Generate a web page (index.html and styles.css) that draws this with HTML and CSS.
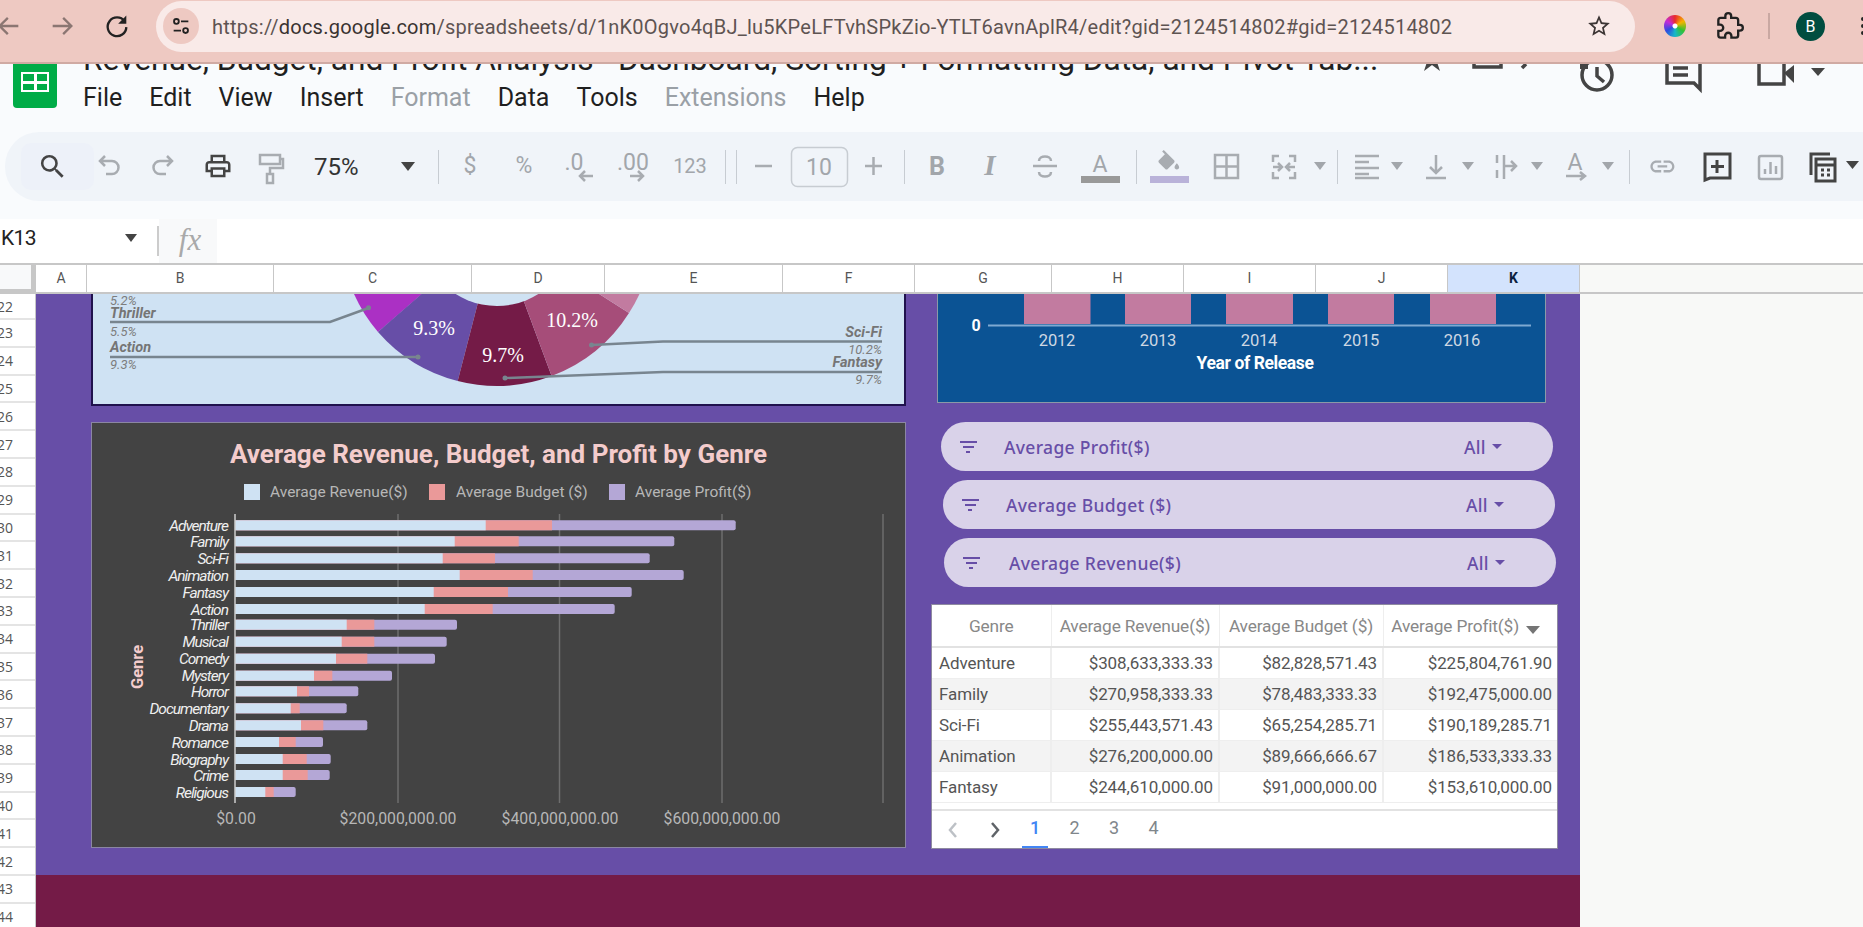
FILE: index.html
```html
<!DOCTYPE html>
<html lang="en">
<head>
    <meta charset="UTF-8">
    <title>Revenue, Budget, and Profit Analysis - Google Sheets</title>
    <link rel="stylesheet" href="styles.css">
</head>
<body>

    <!-- browser chrome -->
    <header class="browser">
        <svg class="nav-icon back" viewBox="0 0 24 24"><path d="M20 12H5M11 5l-7 7 7 7"/></svg>
        <svg class="nav-icon forward" viewBox="0 0 24 24"><path d="M4 12h15M13 5l7 7-7 7"/></svg>
        <svg class="nav-icon reload" viewBox="0 0 24 24"><path d="M18.5 8A8 8 0 1 0 20 13"/><path class="solid" d="M20 3v7h-7z"/></svg>
        <div class="url-pill">
            <span class="tune">
                <svg viewBox="0 0 24 24"><circle cx="7" cy="7" r="2.6"/><path d="M12 7h8M4 17h8"/><circle cx="17" cy="17" r="2.6"/></svg>
            </span>
            <span class="url">https://<b>docs.google.com</b>/spreadsheets/d/1nK0Ogvo4qBJ_lu5KPeLFTvhSPkZio-YTLT6avnAplR4/edit?gid=2124514802#gid=2124514802</span>
            <svg class="url-star" viewBox="0 0 24 24"><path d="M22 9.24l-7.19-.62L12 2 9.19 8.63 2 9.24l5.46 4.73L5.82 21 12 17.27 18.18 21l-1.63-7.03L22 9.24zM12 15.4l-3.76 2.27 1-4.28-3.32-2.88 4.38-.38L12 6.1l1.71 4.04 4.38.38-3.32 2.88 1 4.28L12 15.4z"/></svg>
        </div>
        <span class="color-wheel"></span>
        <svg class="puzzle" viewBox="0 0 24 24"><path d="M20.5 11H19V7c0-1.1-.9-2-2-2h-4V3.5C13 2.12 11.88 1 10.5 1S8 2.12 8 3.5V5H4c-1.1 0-1.99.9-1.99 2v3.8H3.5c1.49 0 2.7 1.21 2.7 2.7s-1.21 2.7-2.7 2.7H2V20c0 1.1.9 2 2 2h3.8v-1.5c0-1.49 1.21-2.7 2.7-2.7 1.49 0 2.7 1.21 2.7 2.7V22H17c1.1 0 2-.9 2-2v-4h1.5c1.38 0 2.5-1.12 2.5-2.5S21.88 11 20.5 11z"/></svg>
        <span class="chrome-sep"></span>
        <span class="avatar">B</span>
        <span class="kebab"></span>
    </header>

    <!-- docs title and menu, page is scrolled so the title is cut off -->
    <section class="docs-head">
        <div class="sheets-logo">
            <span></span><span></span><span></span><span></span>
        </div>
        <div class="docs-title">Revenue, Budget, and Profit Analysis - Dashboard, Sorting + Formatting Data, and Pivot Tab...</div>
        <svg class="head-icons" viewBox="1400 0 463 44">
            <path class="dark" d="M1432 0l3 9h9l-7 5 3 9-8-6-8 6 3-9-7-5h9z" transform="translate(0 -16)"/>
            <path class="line" d="M1474 0v3h27V0"/>
            <path class="line" d="M1526 0l-4 4"/>
            <circle class="line" cx="1597" cy="11" r="15"/>
            <path class="line" d="M1597 3v9l7 6"/>
            <path class="fill-dark" d="M1580 0h8v5h-8z"/>
            <path class="line" d="M1667 0v19h27l6 6V0M1673 4h15M1673 11h15"/>
            <path class="line" d="M1759 0v20h25V0"/>
            <path class="fill-dark" d="M1784 9l10-8v18z"/>
            <path class="fill-dark" d="M1811 4h14l-7 8z"/>
        </svg>
        <nav class="menu">
            <span>File</span><span>Edit</span><span>View</span><span>Insert</span>
            <span class="off">Format</span><span>Data</span><span>Tools</span>
            <span class="off">Extensions</span><span>Help</span>
        </nav>
    </section>

    <!-- toolbar -->
    <section class="toolbar-wrap">
        <div class="toolbar">
            <svg class="toolbar-icons" viewBox="5 132 1858 69">
                <rect class="hover" x="21" y="143" width="73" height="47" rx="10"/>
                <path class="ink" transform="translate(37 151) scale(1.3)" d="M15.5 14h-.79l-.28-.27A6.471 6.471 0 0 0 16 9.5 6.5 6.5 0 1 0 9.5 16c1.61 0 3.09-.59 4.23-1.57l.27.28v.79l5 4.99L20.49 19l-4.99-5zm-6 0C7.01 14 5 11.99 5 9.5S7.01 5 9.5 5 14 7.01 14 9.5 11.99 14 9.5 14z"/>
                <path class="st" d="M105 156l-5 5 5 5M100 161h12a6.500 6.500 0 0 1 0 13h-6"/>
                <path class="st" d="M167 156l5 5-5 5M172 161h-12a6.500 6.500 0 0 0 0 13h6"/>
                <path class="ink" transform="translate(203 151) scale(1.25)" d="M19 8h-1V3H6v5H5c-1.660 0-3 1.340-3 3v6h4v4h12v-4h4v-6c0-1.660-1.340-3-3-3zM8 5h8v3H8V5zm8 12v2H8v-4h8v2zm2-2v-2H6v2H4v-4c0-.55.45-1 1-1h14c.55 0 1 .45 1 1v4h-2z"/>
                <path class="st" d="M260 155h20v9h-20zM280 159h3v9h-13v6M267 174h6v9h-6z"/>
                <text class="zoom-text" x="314" y="175">75%</text>
                <path class="ink" d="M401 162h14l-7 9z"/>
                <path class="sep" d="M438.500 150v34M725.500 150v34M736.500 150v34M904.500 150v34M1136.500 150v34M1337.500 150v34M1629.500 150v34"/>
                <text class="mute" x="470" y="173" text-anchor="middle">$</text>
                <text class="mute" x="524" y="173" text-anchor="middle">%</text>
                <text class="mute" x="574" y="170" text-anchor="middle">.0</text>
                <path class="st" d="M593 176h-13M585 171l-5 5 5 5"/>
                <text class="mute" x="633" y="170" text-anchor="middle">.00</text>
                <path class="st" d="M630 176h13M638 171l5 5-5 5"/>
                <text class="mute small" x="690" y="173" text-anchor="middle">123</text>
                <path class="st" d="M755 166h17M865 166h17M873.500 157v18"/>
                <rect class="box" x="791.500" y="147.500" width="56" height="39" rx="6"/>
                <text class="mute" x="819" y="175" text-anchor="middle">10</text>
                <text class="fmt" x="937" y="175" text-anchor="middle">B</text>
                <text class="fmt italic" x="990" y="175" text-anchor="middle">I</text>
                <path class="st" d="M1033 166h24M1039 161c0-6 12-6 12 0M1039 172c0 6 12 6 12 0"/>
                <text class="mute" x="1100" y="172" text-anchor="middle">A</text>
                <rect class="under-grey" x="1081" y="176" width="39" height="7"/>
                <path class="st-solid" transform="translate(1155 150) scale(1.15)" d="M16.560 8.940L7.620 0 6.210 1.410l2.380 2.380-5.150 5.150c-.59.59-.59 1.540 0 2.120l5.500 5.500c.29.29.68.44 1.060.44s.77-.15 1.060-.44l5.500-5.500c.59-.58.59-1.530 0-2.120zM19 11.500s-2 2.170-2 3.500c0 1.100.9 2 2 2s2-.9 2-2c0-1.330-2-3.500-2-3.500z"/>
                <rect class="under-lilac" x="1150" y="176" width="39" height="7"/>
                <path class="st" d="M1215 155h23v23h-23zM1226.500 155v23M1215 166.500h23"/>
                <path class="st" d="M1279 156h-6v6M1273 172v6h6M1289 156h6v6M1295 172v6h-6M1273 167h9M1278 163l4 4-4 4M1295 167h-9M1290 163l-4 4 4 4"/>
                <path class="cr" d="M1314 162h12l-6 8zM1391 162h12l-6 8zM1462 162h12l-6 8zM1531 162h12l-6 8zM1602 162h12l-6 8z"/>
                <path class="st" d="M1355 156h24M1355 162h14M1355 168h24M1355 174h14M1355 178h24"/>
                <path class="st" d="M1436 155v18M1430 167l6 6 6-6M1426 178h20"/>
                <path class="st" d="M1497 155v8M1497 170v8M1504 155v24M1504 166h12M1511 161l5 5-5 5"/>
                <text class="mute" x="1575" y="170" text-anchor="middle">A</text>
                <path class="st" d="M1566 176h18M1580 172l5 4-5 4"/>
                <path class="st-solid" transform="translate(1648 152) scale(1.2)" d="M3.900 12c0-1.710 1.390-3.100 3.100-3.100h4V7H7c-2.760 0-5 2.240-5 5s2.240 5 5 5h4v-1.900H7c-1.710 0-3.100-1.390-3.100-3.100zM8 13h8v-2H8v2zm9-6h-4v1.900h4c1.710 0 3.100 1.390 3.100 3.100s-1.390 3.100-3.100 3.100h-4V17h4c2.760 0 5-2.240 5-5s-2.240-5-5-5z"/>
                <path class="st-ink" d="M1705 180v-26h25v24h-20zM1717 160v13M1711 166.500h13"/>
                <rect class="st" x="1759" y="156" width="23" height="23" rx="2"/>
                <path class="st" d="M1765 174v-5M1770.500 174v-12M1776 174v-8"/>
                <path class="st-ink" d="M1811 175v-21h19M1816 159h19v22h-19zM1816 165h19M1821 170h3M1827 170h3M1821 175h3M1827 175h3"/>
                <path class="ink" d="M1846 161h13l-6.500 8z"/>
            </svg>
        </div>
    </section>

    <!-- name box and formula bar -->
    <section class="formula-bar">
        <span class="name-box">K13</span>
        <span class="name-caret"></span>
        <span class="formula-sep"></span>
        <span class="fx">fx</span>
    </section>

    <!-- column headers -->
    <section class="col-heads">
        <div class="corner"></div>
        <div class="col col-a">A</div>
        <div class="col col-b">B</div>
        <div class="col col-c">C</div>
        <div class="col col-d">D</div>
        <div class="col col-e">E</div>
        <div class="col col-f">F</div>
        <div class="col col-g">G</div>
        <div class="col col-h">H</div>
        <div class="col col-h">I</div>
        <div class="col col-h">J</div>
        <div class="col col-k">K</div>
    </section>

    <section class="grid-area">
        <div class="row-heads">
            <div class="first">22</div>
            <div>23</div><div>24</div><div>25</div><div>26</div><div>27</div>
            <div>28</div><div>29</div><div>30</div><div>31</div><div>32</div>
            <div>33</div><div>34</div><div>35</div><div>36</div><div>37</div>
            <div>38</div><div>39</div><div>40</div><div>41</div><div>42</div>
            <div>43</div><div>44</div>
        </div>

        <div class="sheet">
            <div class="dashboard">
                <div class="left-col">
                    <!-- genre pie -->
                    <div class="pie-card">
                        <svg class="pie" viewBox="93 294 811 110">
                            <path fill="#ab30c4" d="M497 229L354 294A157 157 0 0 0 378 332L497 229z"/>
                            <path fill="#674ea7" d="M497 229L378 332A157 157 0 0 0 457.700 381L497 229z"/>
                            <path fill="#674ea7" d="M497 229L378 332 425 294H497z"/>
                            <path fill="#741b47" d="M497 229L457.700 381A157 157 0 0 0 551.600 376L497 229z"/>
                            <path fill="#a64d79" d="M497 229L551.600 376A157 157 0 0 0 629 313L497 229z"/>
                            <path fill="#c27ba0" d="M497 229L629 313A157 157 0 0 0 654 229L497 229z"/>
                            <circle fill="#cfe2f3" cx="497" cy="229" r="77"/>
                            <path class="lead" d="M110 322h220l38.500-14"/>
                            <path class="lead" d="M110 357h308"/>
                            <path class="lead" d="M882 341.500H663l-71.500 3.500"/>
                            <path class="lead" d="M882 372H663l-158 6"/>
                            <circle class="dot" cx="368.500" cy="307.700" r="2.500"/>
                            <circle class="dot" cx="418" cy="357" r="2.500"/>
                            <circle class="dot" cx="591.500" cy="345" r="2.500"/>
                            <circle class="dot" cx="505" cy="378" r="2.500"/>
                            <text class="pie-pct" x="434" y="335" text-anchor="middle">9.3%</text>
                            <text class="pie-pct" x="572" y="327" text-anchor="middle">10.2%</text>
                            <text class="pie-pct" x="503" y="362" text-anchor="middle">9.7%</text>
                            <text class="pie-val" x="110" y="305">5.2%</text>
                            <text class="pie-name" x="110" y="318">Thriller</text>
                            <text class="pie-val" x="110" y="336">5.5%</text>
                            <text class="pie-name" x="110" y="352">Action</text>
                            <text class="pie-val" x="110" y="369">9.3%</text>
                            <text class="pie-name" x="882" y="337" text-anchor="end">Sci-Fi</text>
                            <text class="pie-val" x="882" y="354" text-anchor="end">10.2%</text>
                            <text class="pie-name" x="882" y="367" text-anchor="end">Fantasy</text>
                            <text class="pie-val" x="882" y="384" text-anchor="end">9.7%</text>
                        </svg>
                    </div>

                    <!-- stacked bars by genre -->
                    <div class="bars-card">
                        <svg class="bars" viewBox="92 423 813 424">
                            <text class="bars-title" x="498.500" y="463" text-anchor="middle">Average Revenue, Budget, and Profit by Genre</text>
                            <rect class="c-rev" x="244" y="484" width="16" height="16"/>
                            <text class="legend" x="270" y="497">Average Revenue($)</text>
                            <rect class="c-bud" x="429" y="484" width="16" height="16"/>
                            <text class="legend" x="456" y="497">Average Budget ($)</text>
                            <rect class="c-pro" x="609" y="484" width="16" height="16"/>
                            <text class="legend" x="635" y="497">Average Profit($)</text>

                            <path class="gridline" d="M398 514v289M559.500 514v289M722 514v289M883 514v289"/>

                            <g>
                                <rect class="c-pro" x="235" y="520.300" width="500.700" height="10" rx="2"/><rect class="c-bud" x="235" y="520.300" width="317" height="10"/><rect class="c-rev" x="235" y="520.300" width="250.700" height="10"/>
                                <rect class="c-pro" x="235" y="536.300" width="439.300" height="10" rx="2"/><rect class="c-bud" x="235" y="536.300" width="283.700" height="10"/><rect class="c-rev" x="235" y="536.300" width="219.700" height="10"/>
                                <rect class="c-pro" x="235" y="553.300" width="414.700" height="10" rx="2"/><rect class="c-bud" x="235" y="553.300" width="260" height="10"/><rect class="c-rev" x="235" y="553.300" width="207.700" height="10"/>
                                <rect class="c-pro" x="235" y="570" width="448.700" height="10" rx="2"/><rect class="c-bud" x="235" y="570" width="297.700" height="10"/><rect class="c-rev" x="235" y="570" width="224.700" height="10"/>
                                <rect class="c-pro" x="235" y="587" width="396.700" height="10" rx="2"/><rect class="c-bud" x="235" y="587" width="273" height="10"/><rect class="c-rev" x="235" y="587" width="198.700" height="10"/>
                                <rect class="c-pro" x="235" y="604" width="379.700" height="10" rx="2"/><rect class="c-bud" x="235" y="604" width="257.700" height="10"/><rect class="c-rev" x="235" y="604" width="189.700" height="10"/>
                                <rect class="c-pro" x="235" y="619.700" width="222" height="10" rx="2"/><rect class="c-bud" x="235" y="619.700" width="139.300" height="10"/><rect class="c-rev" x="235" y="619.700" width="111.700" height="10"/>
                                <rect class="c-pro" x="235" y="636.700" width="211.700" height="10" rx="2"/><rect class="c-bud" x="235" y="636.700" width="139.300" height="10"/><rect class="c-rev" x="235" y="636.700" width="106.700" height="10"/>
                                <rect class="c-pro" x="235" y="653.700" width="200" height="10" rx="2"/><rect class="c-bud" x="235" y="653.700" width="132.300" height="10"/><rect class="c-rev" x="235" y="653.700" width="101" height="10"/>
                                <rect class="c-pro" x="235" y="670.700" width="157" height="10" rx="2"/><rect class="c-bud" x="235" y="670.700" width="97.300" height="10"/><rect class="c-rev" x="235" y="670.700" width="79" height="10"/>
                                <rect class="c-pro" x="235" y="686.300" width="123.300" height="10" rx="2"/><rect class="c-bud" x="235" y="686.300" width="74" height="10"/><rect class="c-rev" x="235" y="686.300" width="62" height="10"/>
                                <rect class="c-pro" x="235" y="703.300" width="111.700" height="10" rx="2"/><rect class="c-bud" x="235" y="703.300" width="64.700" height="10"/><rect class="c-rev" x="235" y="703.300" width="55.700" height="10"/>
                                <rect class="c-pro" x="235" y="720.300" width="132.300" height="10" rx="2"/><rect class="c-bud" x="235" y="720.300" width="88.300" height="10"/><rect class="c-rev" x="235" y="720.300" width="66" height="10"/>
                                <rect class="c-pro" x="235" y="737" width="88" height="10" rx="2"/><rect class="c-bud" x="235" y="737" width="60.700" height="10"/><rect class="c-rev" x="235" y="737" width="44" height="10"/>
                                <rect class="c-pro" x="235" y="754" width="95.700" height="10" rx="2"/><rect class="c-bud" x="235" y="754" width="71.700" height="10"/><rect class="c-rev" x="235" y="754" width="47.700" height="10"/>
                                <rect class="c-pro" x="235" y="770" width="94.700" height="10" rx="2"/><rect class="c-bud" x="235" y="770" width="72.700" height="10"/><rect class="c-rev" x="235" y="770" width="47.700" height="10"/>
                                <rect class="c-pro" x="235" y="787" width="60.700" height="10" rx="2"/><rect class="c-bud" x="235" y="787" width="38.700" height="10"/><rect class="c-rev" x="235" y="787" width="30.300" height="10"/>
                            </g>

                            <path class="axis" d="M235 514v289"/>

                            <g class="genres" text-anchor="end">
                                <text x="228" y="530.800">Adventure</text>
                                <text x="228" y="546.800">Family</text>
                                <text x="228" y="563.800">Sci-Fi</text>
                                <text x="228" y="580.500">Animation</text>
                                <text x="228" y="597.500">Fantasy</text>
                                <text x="228" y="614.500">Action</text>
                                <text x="228" y="630.200">Thriller</text>
                                <text x="228" y="647.200">Musical</text>
                                <text x="228" y="664.200">Comedy</text>
                                <text x="228" y="681.200">Mystery</text>
                                <text x="228" y="696.800">Horror</text>
                                <text x="228" y="713.800">Documentary</text>
                                <text x="228" y="730.800">Drama</text>
                                <text x="228" y="747.500">Romance</text>
                                <text x="228" y="764.500">Biography</text>
                                <text x="228" y="780.500">Crime</text>
                                <text x="228" y="797.500">Religious</text>
                            </g>

                            <text class="axis-title" transform="translate(143 667) rotate(-90)" text-anchor="middle">Genre</text>

                            <g class="ticks" text-anchor="middle">
                                <text x="236" y="824">$0.00</text>
                                <text x="398" y="824">$200,000,000.00</text>
                                <text x="560" y="824">$400,000,000.00</text>
                                <text x="722" y="824">$600,000,000.00</text>
                            </g>
                        </svg>
                    </div>
                </div>

                <div class="right-col">
                    <!-- releases by year, top is scrolled away -->
                    <div class="year-card">
                        <svg class="years" viewBox="938 294 607 108">
                            <path class="year-bar" d="M1024 294h66.500v30H1024zM1125 294h66v30h-66zM1226 294h67v30h-67zM1328 294h66v30h-66zM1430 294h66v30h-66z"/>
                            <path class="year-axis" d="M988 325.500h543"/>
                            <text class="year-zero" x="976" y="331" text-anchor="middle">0</text>
                            <g class="year-labels" text-anchor="middle">
                                <text x="1057" y="346">2012</text>
                                <text x="1158" y="346">2013</text>
                                <text x="1259" y="346">2014</text>
                                <text x="1361" y="346">2015</text>
                                <text x="1462" y="346">2016</text>
                            </g>
                            <text class="year-title" x="1255" y="369" text-anchor="middle">Year of Release</text>
                        </svg>
                    </div>

                    <div class="filter filter-profit">
                        <span class="filter-icon"><i></i><i></i><i></i></span>
                        <span class="filter-name">Average Profit($)</span>
                        <span class="filter-all">All</span>
                        <span class="filter-caret"></span>
                    </div>
                    <div class="filter filter-budget">
                        <span class="filter-icon"><i></i><i></i><i></i></span>
                        <span class="filter-name">Average Budget ($)</span>
                        <span class="filter-all">All</span>
                        <span class="filter-caret"></span>
                    </div>
                    <div class="filter filter-revenue">
                        <span class="filter-icon"><i></i><i></i><i></i></span>
                        <span class="filter-name">Average Revenue($)</span>
                        <span class="filter-all">All</span>
                        <span class="filter-caret"></span>
                    </div>

                    <!-- table chart -->
                    <div class="table-card">
                        <table class="genre-table">
                            <colgroup>
                                <col class="c1"><col class="c2"><col class="c3"><col class="c4">
                            </colgroup>
                            <thead>
                                <tr>
                                    <th class="center">Genre</th>
                                    <th>Average Revenue($)</th>
                                    <th>Average Budget ($)</th>
                                    <th>Average Profit($) <span class="sort-arrow"></span></th>
                                </tr>
                            </thead>
                            <tbody>
                                <tr><td>Adventure</td><td>$308,633,333.33</td><td>$82,828,571.43</td><td>$225,804,761.90</td></tr>
                                <tr><td>Family</td><td>$270,958,333.33</td><td>$78,483,333.33</td><td>$192,475,000.00</td></tr>
                                <tr><td>Sci-Fi</td><td>$255,443,571.43</td><td>$65,254,285.71</td><td>$190,189,285.71</td></tr>
                                <tr><td>Animation</td><td>$276,200,000.00</td><td>$89,666,666.67</td><td>$186,533,333.33</td></tr>
                                <tr><td>Fantasy</td><td>$244,610,000.00</td><td>$91,000,000.00</td><td>$153,610,000.00</td></tr>
                            </tbody>
                        </table>
                        <div class="pager">
                            <svg class="pager-arrow prev" viewBox="0 0 12 20"><path d="M9 3L3 10l6 7"/></svg>
                            <svg class="pager-arrow next" viewBox="0 0 12 20"><path d="M3 3l6 7-6 7"/></svg>
                            <span class="page active">1</span>
                            <span class="page">2</span>
                            <span class="page">3</span>
                            <span class="page">4</span>
                        </div>
                    </div>
                </div>
            </div>
            <div class="footer-band"></div>
        </div>
    </section>

</body>
</html>
```

FILE: styles.css
```css
* {
    box-sizing: border-box;
}

html, body {
    margin: 0;
    height: 927px;
    overflow: hidden;
}

body {
    width: 1863px;
    background: #f9fbfd;
    font-family: Roboto, sans-serif;
    color: #222;
}

/* browser chrome */
.browser {
    height: 64px;
    background: #eec9c2;
    border-bottom: 2px solid #d0aaa3;
    display: flex;
    align-items: center;
    padding-bottom: 10px;
    position: relative;
    z-index: 2;
}

.nav-icon {
    width: 28px;
    height: 28px;
    fill: none;
    stroke-width: 2;
    flex: none;
}

.nav-icon.back {
    margin-left: -5px;
    stroke: #8b7672;
}

.nav-icon.forward {
    margin-left: 25px;
    stroke: #8b7672;
}

.nav-icon.reload {
    margin-left: 27px;
    stroke: #222;
}

.nav-icon .solid {
    fill: #222;
    stroke: none;
}

.url-pill {
    margin-left: 25px;
    width: 1479px;
    height: 51px;
    border-radius: 26px;
    background: #f9eae8;
    display: flex;
    align-items: center;
    flex: none;
}

.tune {
    width: 36px;
    height: 36px;
    margin-left: 7px;
    border-radius: 50%;
    background: #eec9c2;
    display: flex;
    align-items: center;
    justify-content: center;
    flex: none;
}

.tune svg {
    width: 22px;
    height: 22px;
    fill: none;
    stroke: #222;
    stroke-width: 2;
}

.url {
    margin-left: 13px;
    padding-top: 2px;
    width: 1244px;
    flex: none;
    font-size: 20px;
    letter-spacing: 0.24px;
    color: #5e5452;
    white-space: nowrap;
}

.url b {
    font-weight: 400;
    color: #3a3331;
}

.url-star {
    width: 26px;
    height: 26px;
    fill: #3c3534;
    margin-left: 130px;
    flex: none;
}

.color-wheel {
    width: 22px;
    height: 22px;
    margin-left: 29px;
    border-radius: 50%;
    background: radial-gradient(circle, #fff 0 2px, transparent 3px), conic-gradient(#ea2b2b, #f5b400, #33c133, #14b8c8, #2d4de0, #c32bd8, #ea2b2b);
    flex: none;
}

.puzzle {
    width: 28px;
    height: 28px;
    margin-left: 30px;
    fill: none;
    stroke: #222;
    stroke-width: 2;
    flex: none;
}

.chrome-sep {
    width: 2px;
    height: 26px;
    margin-left: 24px;
    background: #c9a8a2;
    flex: none;
}

.avatar {
    width: 29px;
    height: 29px;
    margin-left: 26px;
    border-radius: 50%;
    background: #004d40;
    color: #fff;
    font-size: 16px;
    display: flex;
    align-items: center;
    justify-content: center;
    flex: none;
}

.kebab {
    width: 4px;
    height: 4px;
    margin-left: 36px;
    border-radius: 50%;
    background: #222;
    box-shadow: 0 -7px #222, 0 7px #222;
    flex: none;
}

/* docs head */
.docs-head {
    height: 68px;
    position: relative;
    overflow: hidden;
    padding: 0 0 0 83px;
}

.sheets-logo {
    position: absolute;
    left: 13px;
    top: -8px;
    width: 44px;
    height: 52px;
    padding: 18px 10px;
    background: #00ac47;
    border-radius: 4px;
    display: grid;
    grid-template-columns: 1fr 1fr;
    gap: 3px;
}

.sheets-logo span {
    background: #00ac47;
    box-shadow: 0 0 0 2px #fff;
}

.docs-title {
    margin-top: -19px;
    font-size: 31.650px;
    line-height: 30px;
    white-space: nowrap;
    color: #1f1f1f;
}

.head-icons {
    position: absolute;
    left: 1400px;
    top: 0;
    width: 463px;
    height: 44px;
}

.head-icons .line {
    fill: none;
    stroke: #444;
    stroke-width: 3.500;
}

.head-icons .dark,
.head-icons .fill-dark {
    fill: #444;
}

.menu {
    display: flex;
    gap: 27px;
    margin-top: 8px;
    font-size: 25px;
    line-height: 30px;
    color: #1f1f1f;
}

.menu .off {
    color: #9aa0a6;
}

/* toolbar */
.toolbar-wrap {
    height: 87px;
    padding-left: 5px;
}

.toolbar {
    height: 69px;
    border-radius: 34px 0 0 34px;
    background: #f0f4f9;
}

.toolbar-icons {
    display: block;
    width: 1858px;
    height: 69px;
}

.toolbar-icons .hover {
    fill: #edf1f9;
}

.toolbar-icons .ink {
    fill: #444;
}

.toolbar-icons .st {
    fill: none;
    stroke: #a8acb1;
    stroke-width: 2.500;
}

.toolbar-icons .st-ink {
    fill: none;
    stroke: #444;
    stroke-width: 3;
}

.toolbar-icons .st-solid {
    fill: #a8acb1;
}

.toolbar-icons .cr {
    fill: #a2a6ab;
}

.toolbar-icons .sep {
    stroke: #c7ccd2;
    stroke-width: 1;
}

.toolbar-icons .box {
    fill: none;
    stroke: #c7ccd2;
    stroke-width: 1.500;
}

.zoom-text {
    font-size: 24px;
    fill: #333;
}

.mute {
    font-size: 23px;
    fill: #a2a6ab;
}

.mute.small {
    font-size: 20px;
}

.fmt {
    font-size: 25px;
    font-weight: 700;
    fill: #a2a6ab;
}

.fmt.italic {
    font-family: "Liberation Serif", serif;
    font-size: 29px;
    font-style: italic;
}

.under-grey {
    fill: #999;
}

.under-lilac {
    fill: #b9b2d9;
}

/* formula bar */
.formula-bar {
    height: 44px;
    background: #fff;
    display: flex;
    align-items: center;
}

.name-box {
    width: 125px;
    padding-left: 1px;
    padding-bottom: 6px;
    font-size: 21px;
    letter-spacing: -0.6px;
    color: #222;
}

.name-caret {
    margin-top: -6px;
    border-left: 6.500px solid transparent;
    border-right: 6.500px solid transparent;
    border-top: 8px solid #444;
}

.formula-sep {
    width: 2px;
    height: 30px;
    margin-left: 20px;
    background: #ccc;
}

.fx {
    width: 58px;
    height: 44px;
    padding-left: 4px;
    line-height: 42px;
    text-align: center;
    background: #f8f9fa;
    font-family: "Liberation Serif", serif;
    font-style: italic;
    font-size: 31px;
    color: #a9a9a9;
}

/* column headers */
.col-heads {
    height: 31px;
    display: flex;
    background: #f8f9f7;
    border-top: 2px solid #c7c7c7;
    border-bottom: 2px solid #c7c7c7;
}

.corner {
    width: 36px;
    background: #f8f9fa;
    border-right: 5px solid #c7c7c7;
    border-bottom: 3px solid #c7c7c7;
}

.col {
    background: #fff;
    border-right: 1px solid #c7c7c7;
    padding-bottom: 2px;
    display: flex;
    align-items: center;
    justify-content: center;
    font-size: 14px;
    color: #555;
}

.col-a { width: 51px; }
.col-b { width: 187px; }
.col-c { width: 198px; }
.col-d { width: 133px; }
.col-e { width: 178px; }
.col-f { width: 132px; }
.col-g { width: 137px; }
.col-h { width: 132px; }

.col-k {
    width: 132px;
    background: #d3e3fd;
    font-weight: 700;
    color: #0b1f3f;
}

/* grid */
.grid-area {
    height: 633px;
    display: flex;
    overflow: hidden;
    background: #f8f9f7;
}

.row-heads {
    width: 36px;
    flex: none;
    background: #fff;
    border-right: 1px solid #c7c7c7;
}

.row-heads div {
    height: 27.800px;
    border-bottom: 2px solid #e4e4e4;
    display: flex;
    align-items: center;
    font-family: "Open Sans", sans-serif;
    font-size: 14px;
    color: #555;
    text-indent: -3px;
}

.row-heads .first {
    height: 26px;
}

.sheet {
    width: 1544px;
    flex: none;
}

.dashboard {
    height: 581px;
    background: #674ea7;
    display: flex;
    padding-left: 55px;
}

.footer-band {
    height: 52px;
    background: #741b47;
}

.left-col {
    width: 815px;
    flex: none;
    display: flex;
    flex-direction: column;
    gap: 16px;
}

.right-col {
    margin-left: 25px;
    width: 640px;
    flex: none;
}

/* pie */
.pie-card {
    height: 112px;
    background: #cfe2f3;
    border: 2px solid #20124d;
    border-top: 0;
}

.pie {
    display: block;
    width: 811px;
    height: 110px;
}

.lead {
    fill: none;
    stroke: #78858f;
    stroke-width: 2.500;
}

.dot {
    fill: #78858f;
}

.pie-pct {
    font-family: "Liberation Serif", serif;
    font-size: 20px;
    fill: #fff;
}

.pie-val {
    font-size: 13px;
    font-style: italic;
    fill: #7d7d7d;
}

.pie-name {
    font-size: 14.500px;
    font-style: italic;
    font-weight: 700;
    fill: #757575;
}

/* bars */
.bars-card {
    height: 426px;
    background: #434343;
    border: 1px solid #8b86a3;
}

.bars {
    display: block;
    width: 813px;
    height: 424px;
}

.bars-title {
    font-size: 26px;
    font-weight: 700;
    fill: #f4cccc;
}

.legend {
    font-size: 15.500px;
    fill: #b7b7b7;
}

.c-rev { fill: #cfe2f3; }
.c-bud { fill: #ea9999; }
.c-pro { fill: #b4a7d6; }

.gridline {
    stroke: #6e6e6e;
    stroke-width: 1.500;
}

.axis {
    stroke: #cccccc;
    stroke-width: 1.500;
}

.genres {
    font-size: 15.500px;
    font-style: italic;
    letter-spacing: -1px;
    fill: #efefef;
}

.axis-title {
    font-size: 16.500px;
    font-weight: 700;
    fill: #f4cccc;
}

.ticks {
    font-size: 15.800px;
    fill: #b7b7b7;
}

/* year chart */
.year-card {
    width: 609px;
    height: 109px;
    margin-left: 6px;
    background: #0b5394;
    border: 1px solid #8a9aa8;
    border-top: 0;
}

.years {
    display: block;
    width: 607px;
    height: 108px;
}

.year-bar {
    fill: #c27ba0;
}

.year-axis {
    stroke: #7fa9d1;
    stroke-width: 2;
}

.year-zero {
    font-size: 16px;
    font-weight: 700;
    fill: #fff;
}

.year-labels {
    font-size: 16.500px;
    letter-spacing: -0.2px;
    fill: #cfd8e3;
}

.year-title {
    font-size: 17.500px;
    font-weight: 700;
    letter-spacing: -0.4px;
    fill: #fff;
}

/* filters */
.filter {
    width: 612px;
    height: 49px;
    border-radius: 25px;
    background: #d9d2e9;
    display: flex;
    align-items: center;
    font-family: "Noto Sans", sans-serif;
    font-size: 17.500px;
    font-weight: 500;
    letter-spacing: 0.32px;
    color: #674ea7;
}

.filter-profit {
    margin: 19px 0 9px 10px;
}

.filter-budget {
    margin: 0 0 9px 12px;
}

.filter-revenue {
    margin: 0 0 17px 13px;
}

.filter-icon {
    width: 18px;
    margin-left: 18px;
    display: flex;
    flex-direction: column;
    align-items: center;
    gap: 3px;
    flex: none;
}

.filter-icon i {
    height: 2px;
    background: #674ea7;
}

.filter-icon i:nth-child(1) { width: 17px; }
.filter-icon i:nth-child(2) { width: 11px; }
.filter-icon i:nth-child(3) { width: 4px; }

.filter-name {
    margin-left: 27px;
    width: 460px;
    flex: none;
}

.filter-revenue .filter-name {
    margin-left: 29px;
    width: 458px;
}

.filter-caret {
    margin-left: 6px;
    border-left: 5px solid transparent;
    border-right: 5px solid transparent;
    border-top: 5px solid #674ea7;
}

/* table */
.table-card {
    width: 627px;
    height: 245px;
    background: #fff;
    border: 1px solid #8e8aa0;
    display: flex;
    flex-direction: column;
}

.genre-table {
    width: 625px;
    table-layout: fixed;
    border-collapse: collapse;
    font-size: 17px;
    letter-spacing: -0.1px;
    color: #555;
}

.c1 { width: 119px; }
.c2 { width: 168px; }
.c3 { width: 164px; }
.c4 { width: 174px; }

.genre-table th {
    height: 42px;
    padding: 0 1px;
    font-size: 17.300px;
    font-weight: 400;
    letter-spacing: -0.15px;
    color: #888;
    border-right: 1px solid #eee;
    border-bottom: 2px solid #e2e2e2;
    white-space: nowrap;
}

.genre-table td {
    height: 31.200px;
    padding: 0 5px 0 7px;
    text-align: right;
    border-right: 2px solid #eee;
    border-bottom: 1px solid #eee;
    white-space: nowrap;
}

.genre-table td:first-child {
    text-align: left;
}

.genre-table td:last-child,
.genre-table th:last-child {
    border-right: 0;
}

.genre-table th:last-child {
    padding-right: 10px;
}

.genre-table tbody tr:nth-child(even) {
    background: #f3f3f3;
}

.sort-arrow {
    display: inline-block;
    margin-left: 3px;
    border-left: 7px solid transparent;
    border-right: 7px solid transparent;
    border-top: 8px solid #757575;
    vertical-align: -2px;
}

.pager {
    margin-top: 6px;
    flex: 1;
    border-top: 2px solid #e2e2e2;
    display: flex;
    align-items: center;
    font-size: 18px;
    color: #80868b;
}

.pager-arrow {
    width: 12px;
    height: 20px;
    fill: none;
    stroke-width: 2.500;
    flex: none;
}

.pager-arrow.prev {
    margin-left: 15px;
    stroke: #bdc1c6;
}

.pager-arrow.next {
    margin-left: 30px;
    margin-right: 21px;
    stroke: #5f6368;
}

.page {
    width: 26px;
    height: 100%;
    margin-right: 13.500px;
    padding-bottom: 5px;
    display: flex;
    align-items: center;
    justify-content: center;
}

.page.active {
    color: #4285f4;
    font-weight: 500;
    box-shadow: inset 0 -2px #4285f4;
}
```
